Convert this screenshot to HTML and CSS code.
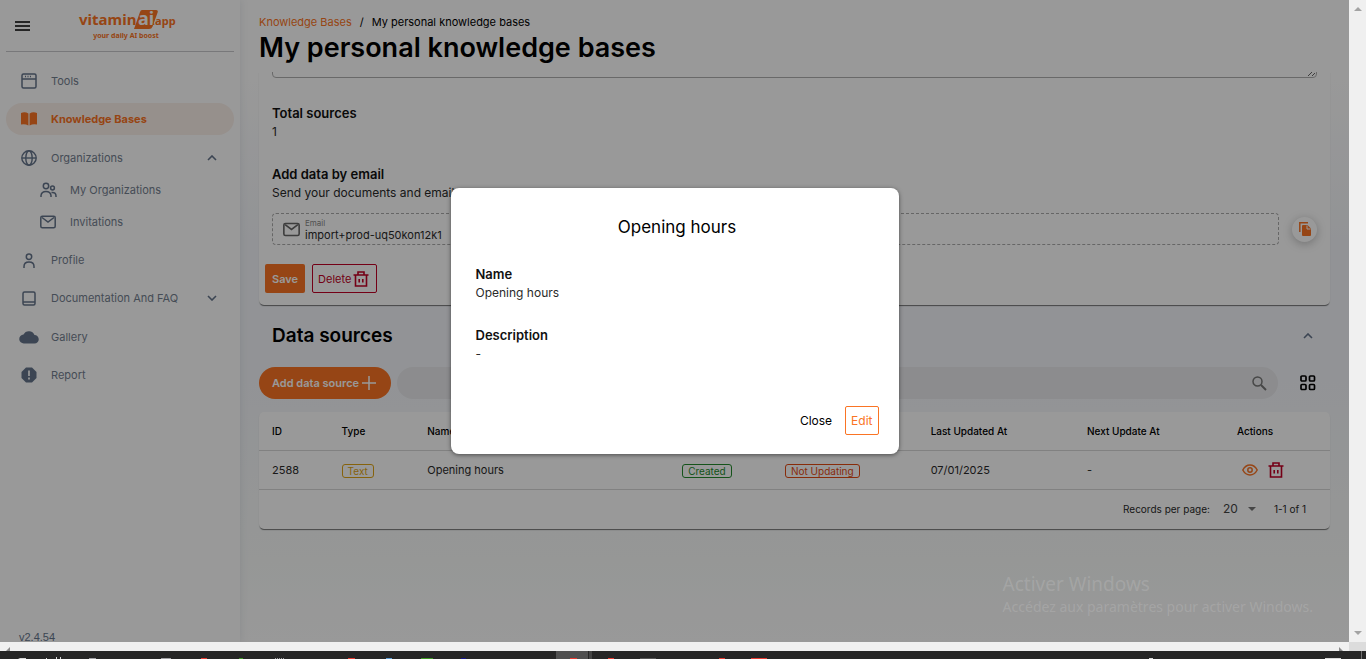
FILE: index.html
```html
<!DOCTYPE html>
<html lang="en">
<head>
<meta charset="utf-8">
<meta name="viewport" content="width=device-width, initial-scale=1">
<title>My personal knowledge bases</title>
<link rel="stylesheet" href="styles.css">
</head>
<body>
<svg class="defs" aria-hidden="true">
  <symbol id="trash" viewBox="0 0 16 16"><path d="M5 3.500V1h6v2.500M.5 4h15M2.500 4.500V15h11V4.500M6.200 8v3.500M9.800 8v3.500" fill="none" stroke="currentColor" stroke-width="1.600"/></symbol>
  <symbol id="mail" viewBox="0 0 16 14"><rect x=".8" y="1.300" width="14.400" height="11.400" rx="1.500" fill="none" stroke="currentColor" stroke-width="1.500"/><path d="M2 2.500l6 4.500 6-4.500" fill="none" stroke="currentColor" stroke-width="1.500"/></symbol>
  <symbol id="up" viewBox="0 0 10 6"><path d="M1 5l4-4 4 4" fill="none" stroke="currentColor" stroke-width="1.600"/></symbol>
  <symbol id="down" viewBox="0 0 10 6"><path d="M1 1l4 4 4-4" fill="none" stroke="currentColor" stroke-width="1.600"/></symbol>
</svg>
<div class="screen">
  <div class="app">
    <aside class="sidebar">
      <div class="brand">
        <button class="plain menu" aria-label="Menu"><svg width="15" height="10" viewBox="0 0 15 10"><path d="M0 1h15M0 5h15M0 9h15" stroke="#000" stroke-width="1.500"/></svg></button>
        <svg class="logo" width="98" height="34" viewBox="0 0 98 34" role="img" aria-label="vitamin ai app">
          <path d="M64 1h14q2.500 0 1.600 2.500l-5 14q-1 2.500-3.500 2.500H56l6-17q.7-2 2-2z" fill="#fa7424"/>
          <text x="1" y="16" class="logo-main">vitamin</text>
          <text x="60" y="16" class="logo-ai">ai</text>
          <text x="74" y="16" class="logo-app">.app</text>
          <text x="48" y="29" text-anchor="middle" class="logo-sub">your daily AI boost</text>
        </svg>
      </div>
      <nav class="nav">
        <a href="#tools" class="item"><span class="ic"><svg width="16" height="16" viewBox="0 0 16 16" fill="none" stroke="currentColor" stroke-width="1.500"><rect x="1" y="1" width="14" height="14" rx="1.500"/><path d="M1 6h14M4 3.500h1M6.500 3.500h1M9 3.500h1"/></svg></span>Tools</a>
        <a href="#kb" class="item active"><span class="ic"><svg width="16" height="14" viewBox="0 0 16 14" fill="currentColor"><path d="M0 1q4-1.500 7.400.5v12Q4 11.500 0 12.500zM16 1q-4-1.500-7.400.5v12Q12 11.500 16 12.500z"/></svg></span>Knowledge Bases</a>
        <a href="#org" class="item"><span class="ic"><svg width="16" height="16" viewBox="0 0 16 16" fill="none" stroke="currentColor" stroke-width="1.400"><circle cx="8" cy="8" r="7.200"/><ellipse cx="8" cy="8" rx="3.200" ry="7.200"/><path d="M1 8h14"/></svg></span>Organizations<svg class="chev" width="10" height="6"><use href="#up"/></svg></a>
        <a href="#myorg" class="item sub"><span class="ic"><svg width="17" height="16" viewBox="0 0 17 16" fill="none" stroke="currentColor" stroke-width="1.500"><circle cx="6" cy="4" r="2.700"/><circle cx="12.500" cy="6" r="1.900"/><path d="M1 15v-1.500Q1.500 9.500 6 9.500t5 4V15M11.500 10.500Q16 10 16 14v1"/></svg></span>My Organizations</a>
        <a href="#inv" class="item sub"><span class="ic"><svg width="16" height="14"><use href="#mail"/></svg></span>Invitations</a>
        <a href="#profile" class="item"><span class="ic"><svg width="12" height="15" viewBox="0 0 12 15" fill="none" stroke="currentColor" stroke-width="1.500"><circle cx="6" cy="3.700" r="2.700"/><path d="M1 15v-1.500q0-4.500 5-4.500t5 4.500V15"/></svg></span>Profile</a>
        <a href="#docs" class="item"><span class="ic"><svg width="14" height="15" viewBox="0 0 14 15" fill="none" stroke="currentColor" stroke-width="1.500"><rect x="1" y="1" width="12" height="13" rx="1.500"/><path d="M1 11h12"/></svg></span>Documentation And FAQ<svg class="chev" width="10" height="6"><use href="#down"/></svg></a>
        <a href="#gallery" class="item late"><span class="ic"><svg width="20" height="14" viewBox="0 0 20 14" fill="currentColor"><path d="M5 13.500a4.500 4.500 0 0 1-.5-9A6 6 0 0 1 15.500 5a4.200 4.200 0 0 1 0 8.500z"/></svg></span>Gallery</a>
        <a href="#report" class="item"><span class="ic"><svg width="16" height="16" viewBox="0 0 16 16"><path d="M5 .5h6L15.500 5v6L11 15.500H5L.5 11V5z" fill="currentColor"/><path d="M8 3.500v5.500M8 10.500v2" stroke="#fff" stroke-width="1.700"/></svg></span>Report</a>
      </nav>
      <div class="version">v2.4.54</div>
    </aside>

    <main class="main">
      <header class="head">
        <div class="crumbs"><a href="#kb">Knowledge Bases</a><span>/</span><span>My personal knowledge bases</span></div>
        <h1>My personal knowledge bases</h1>
      </header>
      <section class="card details">
        <div class="clip"><textarea aria-label="Description"></textarea></div>
        <div class="block"><h3>Total sources</h3><p>1</p></div>
        <div class="block"><h3>Add data by email</h3><p>Send your documents and email content</p></div>
        <div class="mailrow">
          <div class="mailbox"><svg width="17" height="15"><use href="#mail"/></svg>
            <div class="mailfield"><label for="email">Email</label><input id="email" readonly value="import+prod-uq50kon12k1"></div>
          </div>
          <button class="copy" aria-label="Copy"><svg width="12" height="14" viewBox="0 0 12 14"><path d="M.8 10V.8H9" fill="none" stroke="currentColor" stroke-width="1.500"/><path d="M4 3h4.500L12 6.500V13q0 1-1 1H4q-1 0-1-1V4q0-1 1-1z" fill="currentColor"/><path d="M8 3.500V7h3.500" fill="none" stroke="#fff"/></svg></button>
        </div>
        <div class="btns"><button class="btn solid">Save</button><button class="btn danger">Delete<svg width="16" height="16"><use href="#trash"/></svg></button></div>
      </section>

      <div class="sources"><h2>Data sources</h2><button class="plain" aria-label="Collapse"><svg width="10" height="6"><use href="#up"/></svg></button></div>
      <div class="toolbar">
        <button class="add">Add data source<svg width="14" height="14" viewBox="0 0 14 14"><path d="M7 0v14M0 7h14" stroke="currentColor" stroke-width="1.500"/></svg></button>
        <div class="search"><input type="search" aria-label="Search"><svg width="15" height="15" viewBox="0 0 15 15" fill="none" stroke="currentColor"><circle cx="5.500" cy="5.500" r="4.500" stroke-width="1.500"/><path d="M9 9l5 5" stroke-width="2"/></svg></div>
        <button class="plain grid" aria-label="Grid view"><svg width="16" height="16" viewBox="0 0 16 16" fill="none" stroke="#000" stroke-width="1.700"><rect x="1" y="1" width="5" height="5" rx="1"/><rect x="9.500" y="1" width="5" height="5" rx="1"/><rect x="1" y="9.500" width="5" height="5" rx="1"/><rect x="9.500" y="9.500" width="5" height="5" rx="1"/></svg></button>
      </div>
      <section class="card">
        <table>
          <colgroup><col class="c1"><col class="c2"><col class="c3"><col class="c4"><col class="c5"><col class="c6"><col class="c7"><col></colgroup>
          <thead><tr><th>ID</th><th>Type</th><th>Name</th><th></th><th></th><th>Last Updated At</th><th>Next Update At</th><th>Actions</th></tr></thead>
          <tbody><tr><td>2588</td><td><span class="tag yellow">Text</span></td><td>Opening hours</td><td><span class="tag green">Created</span></td><td><span class="tag red">Not Updating</span></td><td>07/01/2025</td><td>-</td>
          <td><div class="acts"><button class="plain eye" aria-label="View"><svg width="16" height="12" viewBox="0 0 16 12" fill="none" stroke="currentColor" stroke-width="1.500"><path d="M.8 6Q3.500 1 8 1t7.200 5Q12.500 11 8 11T.8 6z"/><circle cx="8" cy="6" r="2.200"/></svg></button><button class="plain del" aria-label="Delete source"><svg width="16" height="16"><use href="#trash"/></svg></button></div></td></tr></tbody>
        </table>
        <div class="pager"><label for="rows">Records per page:</label><div class="pick"><select id="rows"><option>20</option></select><svg width="8" height="4" viewBox="0 0 8 4"><path d="M0 0h8L4 4z" fill="#757575"/></svg></div><span>1-1 of 1</span></div>
      </section>
    </main>

    <div class="backdrop">
      <div class="dialog" role="dialog" aria-labelledby="dlg">
        <h2 id="dlg">Opening hours</h2>
        <div class="block"><h3>Name</h3><p>Opening hours</p></div>
        <div class="block"><h3>Description</h3><p>-</p></div>
        <div class="foot"><button class="btn flat">Close</button><button class="btn outline">Edit</button></div>
      </div>
    </div>
    <div class="watermark"><div class="wm1">Activer Windows</div><div class="wm2">Accédez aux paramètres pour activer Windows.</div></div>
  </div>
  <div class="vbar"><svg width="8" height="4" viewBox="0 0 8 4"><path d="M0 4h8L4 0z" fill="#a3a3a3"/></svg><svg width="8" height="4" viewBox="0 0 8 4"><path d="M0 0h8L4 4z" fill="#a3a3a3"/></svg></div>
  <div class="hbar"><svg width="4" height="4"><path d="M4 0v4H0z" fill="#8a8a8a"/></svg><svg width="4" height="4"><path d="M0 0l4 4H0z" fill="#8a8a8a"/></svg></div>
  <div class="corner"></div>
  <div class="taskbar">
    <svg width="1366" height="8">
      <rect x="556" width="32" height="8" fill="#505050"/><rect x="589" width="3" height="8" fill="#444"/>
      <g fill="#d8d8d8"><path d="M18 8l2-1h6v1zM46 7h1v1h-1zM56 6h1v2h-1zM60 6h1v2h-1z"/><rect x="1149" y="7" width="4" height="1"/><rect x="1325" y="7" width="16" height="1"/></g>
      <g fill="#a0a0a4"><rect x="89" y="7" width="7" height="1"/><rect x="161" y="7" width="10" height="1"/><path d="M275 7h1v1h-1zM277 7h1v1h-1zM279 7h1v1h-1zM281 7h1v1h-1zM283 7h1v1h-1z"/></g>
      <g fill="#e83a30"><rect x="201" y="7" width="6" height="1"/><rect x="348" y="7" width="7" height="1"/><rect x="570" y="7" width="7" height="1"/><rect x="608" y="7" width="6" height="1"/><rect x="719" y="7" width="6" height="1"/><rect x="751" y="7" width="16" height="1"/></g>
      <g fill="#3d9a22"><rect x="239" y="7" width="4" height="1"/><rect x="421" y="7" width="12" height="1"/></g>
      <rect x="386" y="7" width="6" height="1" fill="#5d9fd8"/><rect x="461" y="7" width="5" height="1" fill="#14148c"/><rect x="640" y="7" width="16" height="1" fill="#555"/><rect x="1361" width="1" height="8" fill="#707070"/>
    </svg>
  </div>
</div>
</body>
</html>
```

FILE: styles.css
```css
* { box-sizing: border-box; }
body { margin: 0; font-family: Inter, "Noto Sans", sans-serif; font-size: 12px; line-height: 16px; color: #2a2a2a; }
h1, h2, h3, p { margin: 0; }
button, input, select, textarea { font: inherit; color: inherit; }
button { cursor: pointer; }
a { color: inherit; text-decoration: none; }
svg { display: block; flex: none; }
.defs { position: absolute; width: 0; height: 0; }
.plain { background: none; border: 0; padding: 0; }

.screen { display: grid; grid-template-columns: 1fr 17px; grid-template-rows: 1fr 9px 8px; height: 100vh; overflow: hidden; background: #f0f0f0; }
.app { position: relative; display: flex; min-height: 0; overflow: hidden; background: #fff; }

.sidebar { display: flex; flex-direction: column; width: 240px; flex: none; padding: 0 6px; background: #fff; box-shadow: 0 0 8px rgba(80, 100, 120, .15); z-index: 1; }
.brand { display: flex; align-items: center; gap: 48px; height: 52px; padding: 0 9px; border-bottom: 1px solid #c8c8cc; flex: none; }
.logo { overflow: visible; }
.logo text { font-family: "Noto Sans", sans-serif; font-weight: 700; fill: #fa7424; }
.logo .logo-main { font-size: 15px; }
.logo .logo-ai { font-size: 18px; fill: #fff; }
.logo .logo-app { font-size: 11px; }
.logo .logo-sub { font-size: 7px; }
.nav { display: flex; flex-direction: column; gap: 6px; padding-top: 13px; font-size: 11px; }
.item { display: flex; align-items: center; height: 32px; padding: 0 17px 0 11px; border-radius: 16px; color: #748090; white-space: nowrap; }
.ic { display: flex; justify-content: center; width: 24px; margin-right: 10px; color: #64748b; }
.item.active { margin-bottom: 1px; background: #fbf0ea; color: #fa7424; font-weight: 700; }
.active .ic { color: #fa7424; }
.item.sub { margin-top: -6px; padding-left: 30px; }
.item.late { margin-top: 1px; }
.chev { margin-left: auto; color: #64748b; }
.version { margin: auto 0 -3px 13px; font-family: "Liberation Sans", sans-serif; color: #64748b; font-size: 11px; }

.main { flex: 1; min-width: 0; padding: 0 19px; background: linear-gradient(#fff 0, #fff 80px, #f4f6fa 240px, #f4f6fa 380px, #fafcfb 560px, #fff 100%); }
.head { height: 72px; padding-top: 14px; color: #000; }
.crumbs { display: flex; gap: 8px; font-size: 11px; }
.crumbs a { color: #fa7424; }
h1 { font-size: 27px; line-height: 36px; font-weight: 600; white-space: nowrap; }
.card { background: #fff; border-radius: 5px; box-shadow: 0 2px 1px -1px rgba(0, 0, 0, .4), 0 1px 1px rgba(0, 0, 0, .2); }
.details { padding: 0 13px 12px; border-top-left-radius: 0; border-top-right-radius: 0; clip-path: inset(0 -4px -6px -4px); }
.clip { display: flex; align-items: flex-end; height: 6px; overflow: hidden; }
.clip textarea { width: 100%; height: 60px; border: 1px solid #b0b0b0; border-radius: 4px; flex: none; }
.block h3 { font-size: 13px; line-height: 20px; font-weight: 600; color: #111; }
.block p { line-height: 18px; }
.details .block { height: 61px; }
.details .clip + .block { margin-top: 25px; }
.mailrow { display: flex; align-items: center; gap: 13px; margin-top: -12px; }
.mailbox { flex: 1; display: flex; align-items: center; gap: 5px; height: 32px; padding: 0 10px; border: 1px dashed #aaa; border-radius: 4px; color: #666; }
.mailfield { display: flex; flex-direction: column; flex: 1; padding-top: 2px; }
.mailfield label { font-size: 8px; line-height: 10px; color: #888; }
.mailfield input { border: 0; padding: 0; background: none; height: 14px; color: #2a2a2a; outline: 0; font-size: 11px; }
.copy { display: flex; align-items: center; justify-content: center; width: 25px; height: 25px; padding: 0; border: 0; border-radius: 50%; background: #fff; color: #fa7424; box-shadow: 0 2px 10px rgba(0, 0, 0, .25); }
.btns { display: flex; gap: 7px; margin: 19px 0 0 -7px; font-size: 11px; }
.btn { display: flex; align-items: center; height: 29px; padding: 0 5px; border: 1px solid transparent; border-radius: 2px; background: none; }
.solid { padding: 0 6px; background: #fa7424; color: #fff; font-weight: 600; }
.danger { border-color: #c10025; color: #c10025; gap: 2px; padding-right: 7px; }

.sources { display: flex; align-items: center; justify-content: space-between; height: 62px; padding: 0 17px 0 13px; color: #64748b; }
.sources h2 { font-size: 19px; line-height: 26px; font-weight: 600; color: #000; }
.toolbar { display: flex; align-items: center; gap: 6px; margin-bottom: 13px; }
.add { display: flex; align-items: center; gap: 3px; height: 32px; padding: 0 15px 0 13px; border: 0; border-radius: 16px; background: #fa7424; color: #fff; font-size: 11px; font-weight: 600; white-space: nowrap; }
.search { flex: 1; display: flex; align-items: center; height: 32px; padding: 0 11px 0 16px; border-radius: 16px; background: #e9eaed; color: #777; }
.search input { flex: 1; min-width: 0; border: 0; background: none; outline: 0; }
.grid { margin: 0 14px 0 16px; }

table { width: 100%; border-collapse: collapse; table-layout: fixed; }
th, td { height: 39px; padding: 0 0 0 13px; text-align: left; border-bottom: 1px solid #d8d8d8; white-space: nowrap; font-size: 11px; }
th { height: 38px; font-size: 10px; font-weight: 500; color: #000; }
.c1 { width: 6.5%; } .c2 { width: 8%; } .c3 { width: 23.8%; } .c4 { width: 9.6%; } .c5 { width: 13.6%; } .c6 { width: 14.6%; } .c7 { width: 14%; }
.tag { display: inline-block; padding: 0 5px; border: 1px solid; border-radius: 3px; font-size: 10px; line-height: 12px; vertical-align: middle; }
.yellow { color: #e0a415; } .green { color: #238b2c; } .red { color: #e34a12; }
.acts { display: flex; align-items: center; gap: 10px; padding-left: 5px; }
.eye { color: #fa7424; } .del { color: #c10025; }
.pager { display: flex; align-items: center; justify-content: flex-end; gap: 13px; height: 39px; padding-right: 24px; font-size: 10px; }
.pick { display: flex; align-items: center; gap: 10px; margin-right: 5px; }
.pick select { appearance: none; border: 0; background: none; padding: 0; font-size: 12px; color: #444; }

.backdrop { position: absolute; inset: 0; display: flex; align-items: center; justify-content: center; background: rgba(0, 0, 0, .4); z-index: 2; }
.dialog { width: 448px; max-width: 90%; padding: 27px 20px 19px 25px; border-radius: 8px; background: #fff; box-shadow: 0 1px 4px rgba(0, 0, 0, .5); }
.dialog h2 { margin-bottom: 24px; font-size: 17px; line-height: 25px; font-weight: 400; text-align: center; color: #000; }
.dialog h2 + .block { margin-bottom: 23px; }
.foot { display: flex; justify-content: flex-end; gap: 7px; margin-top: 43px; }
.flat { color: #000; }
.outline { border-color: #fa7424; color: #fa7424; }
.watermark { position: absolute; right: 36px; bottom: 25px; z-index: 3; color: rgba(255, 255, 255, .14); font-family: "Noto Sans", sans-serif; white-space: nowrap; }
.wm1 { font-size: 19px; line-height: 26px; }
.wm2 { font-size: 14px; line-height: 20px; }

.vbar { display: flex; flex-direction: column; align-items: center; justify-content: space-between; padding: 7px 0; background: #f0f0f0; }
.hbar { display: flex; align-items: flex-end; justify-content: space-between; padding: 0 6px; background: #f0f0f0; }
.corner { background: #dcdcdc; }
.taskbar { grid-column: 1 / -1; overflow: hidden; background: #262626; }
```
